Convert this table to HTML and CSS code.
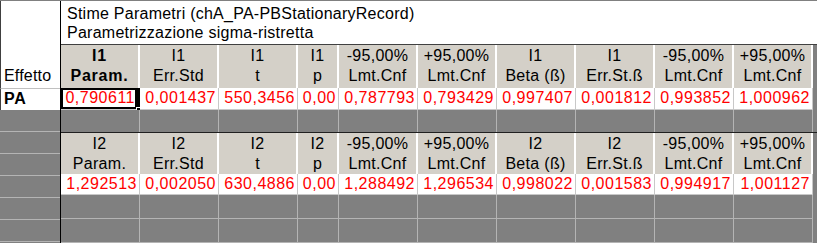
FILE: index.html
```html
<!DOCTYPE html>
<html>
<head>
<meta charset="utf-8">
<link rel="stylesheet" href="styles.css">
</head>
<body>
<div class="sheet">
  <div class="rowhdr">
    <div class="rh-top">Effetto</div>
    <div class="rh-pa">PA</div>
    <div class="rh-g"></div>
    <div class="rh-g"></div>
    <div class="rh-g"></div>
    <div class="rh-g"></div>
    <div class="rh-g"></div>
    <div class="rh-g"></div>
  </div>
  <div class="main">
    <div class="title">
      <div>Stime Parametri (chA_PA-PBStationaryRecord)</div>
      <div>Parametrizzazione sigma-ristretta</div>
    </div>
    <div class="grid hdr hdr1">
      <div class="c b">I1<br>Param.</div>
      <div class="c">I1<br>Err.Std</div>
      <div class="c">I1<br>t</div>
      <div class="c">I1<br>p</div>
      <div class="c">-95,00%<br>Lmt.Cnf</div>
      <div class="c">+95,00%<br>Lmt.Cnf</div>
      <div class="c">I1<br>Beta (ß)</div>
      <div class="c">I1<br>Err.St.ß</div>
      <div class="c">-95,00%<br>Lmt.Cnf</div>
      <div class="c">+95,00%<br>Lmt.Cnf</div>
      <div class="f"></div>
    </div>
    <div class="grid data data1">
      <div class="c sel">0,790611<span class="handle"></span></div>
      <div class="c">0,001437</div>
      <div class="c">550,3456</div>
      <div class="c">0,00</div>
      <div class="c">0,787793</div>
      <div class="c">0,793429</div>
      <div class="c">0,997407</div>
      <div class="c">0,001812</div>
      <div class="c">0,993852</div>
      <div class="c">1,000962</div>
      <div class="f"></div>
    </div>
    <div class="grid gray g1">
      <div class="c"></div><div class="c"></div><div class="c"></div><div class="c"></div><div class="c"></div>
      <div class="c"></div><div class="c"></div><div class="c"></div><div class="c"></div><div class="c"></div>
      <div class="f"></div>
    </div>
    <div class="grid hdr hdr2">
      <div class="c">I2<br>Param.</div>
      <div class="c">I2<br>Err.Std</div>
      <div class="c">I2<br>t</div>
      <div class="c">I2<br>p</div>
      <div class="c">-95,00%<br>Lmt.Cnf</div>
      <div class="c">+95,00%<br>Lmt.Cnf</div>
      <div class="c">I2<br>Beta (ß)</div>
      <div class="c">I2<br>Err.St.ß</div>
      <div class="c">-95,00%<br>Lmt.Cnf</div>
      <div class="c">+95,00%<br>Lmt.Cnf</div>
      <div class="f"></div>
    </div>
    <div class="grid data data2">
      <div class="c">1,292513</div>
      <div class="c">0,002050</div>
      <div class="c">630,4886</div>
      <div class="c">0,00</div>
      <div class="c">1,288492</div>
      <div class="c">1,296534</div>
      <div class="c">0,998022</div>
      <div class="c">0,001583</div>
      <div class="c">0,994917</div>
      <div class="c">1,001127</div>
      <div class="f"></div>
    </div>
    <div class="grid gray g2">
      <div class="c"></div><div class="c"></div><div class="c"></div><div class="c"></div><div class="c"></div>
      <div class="c"></div><div class="c"></div><div class="c"></div><div class="c"></div><div class="c"></div>
      <div class="f"></div>
    </div>
    <div class="grid gray g3">
      <div class="c"></div><div class="c"></div><div class="c"></div><div class="c"></div><div class="c"></div>
      <div class="c"></div><div class="c"></div><div class="c"></div><div class="c"></div><div class="c"></div>
      <div class="f"></div>
    </div>
  </div>
</div>
</body>
</html>
```
FILE: styles.css
```css
* { box-sizing: border-box; }
html, body { margin: 0; padding: 0; }
body {
  background: #808080;
  font-family: "Liberation Sans", Arial, sans-serif;
  font-size: 16px;
  color: #000;
  width: 817px;
  height: 243px;
  overflow: hidden;
}
.sheet {
  display: flex;
  height: 243px;
  border-top: 1px solid #808080;
}
.rowhdr {
  width: 61px;
  flex: none;
  border-right: 1px solid #000;
  display: flex;
  flex-direction: column;
}
.rh-top {
  height: 87px;
  background: #fff;
  border-left: 1px solid #404040;
  display: flex;
  align-items: flex-end;
  padding: 0 0 3px 3px;
  line-height: 18px;
  letter-spacing: 0.2px;
}
.rh-pa {
  height: 22px;
  background: #fff;
  border-top: 1px solid #c0c0c0;
  border-left: 1px solid #404040;
  font-weight: bold;
  padding-left: 3px;
  line-height: 20px;
  letter-spacing: 0.8px;
}
.rh-g {
  height: 22px;
  background: #808080;
  border-bottom: 1px solid #b4b4b4;
}
.rh-g:first-of-type { height: 22px; }
.main {
  flex: 1;
  display: flex;
  flex-direction: column;
}
.title {
  height: 44px;
  background: #fff;
  border-bottom: 1px solid #404040;
  padding: 3px 0 0 6px;
  line-height: 19px;
  letter-spacing: 0.25px;
}
.grid {
  display: grid;
  grid-template-columns: repeat(3, 79px) 41px repeat(6, 79px) 1fr;
}
.grid .c {
  border-right: 1px solid #fff;
  position: relative;
}
.hdr { height: 43px; }
.hdr .c {
  background: #d4d0c8;
  text-align: center;
  line-height: 20px;
  padding-top: 1px;
  letter-spacing: 0.3px;
  border-right: 2px solid #fff;
}
.hdr .b { font-weight: bold; letter-spacing: 0.8px; }
.hdr .f { background: #808080; }
.hdr2 { height: 42px; border-top: 1px solid #202020; border-bottom: 1px solid #000; }
.data { height: 22px; }
.data .c {
  background: #fff;
  color: #ff0000;
  text-align: right;
  padding-right: 2px;
  line-height: 20px;
  letter-spacing: 0.5px;
  border-right: 1px solid #c8c8c8;
  border-bottom: 1px solid #c8c8c8;
}
.data .f { background: #808080; }
.data2 { height: 21px; }
.gray { height: 22px; }
.gray .c {
  background: #808080;
  border-right: 1px solid #b4b4b4;
  border-bottom: 1px solid #b4b4b4;
}
.gray .f { background: #808080; }
.g1 { height: 22px; }
.g1 .c { border-bottom: none; }
.g2 { height: 24px; }
.g3 { height: 24px; }
.sel {
  box-shadow: inset 0 0 0 2px #000;
  border-right: 3px solid #000 !important;
}
.handle {
  position: absolute;
  right: -5px;
  bottom: -4px;
  width: 6px;
  height: 6px;
  background: #000;
  border: 1px solid #fff;
}
```
